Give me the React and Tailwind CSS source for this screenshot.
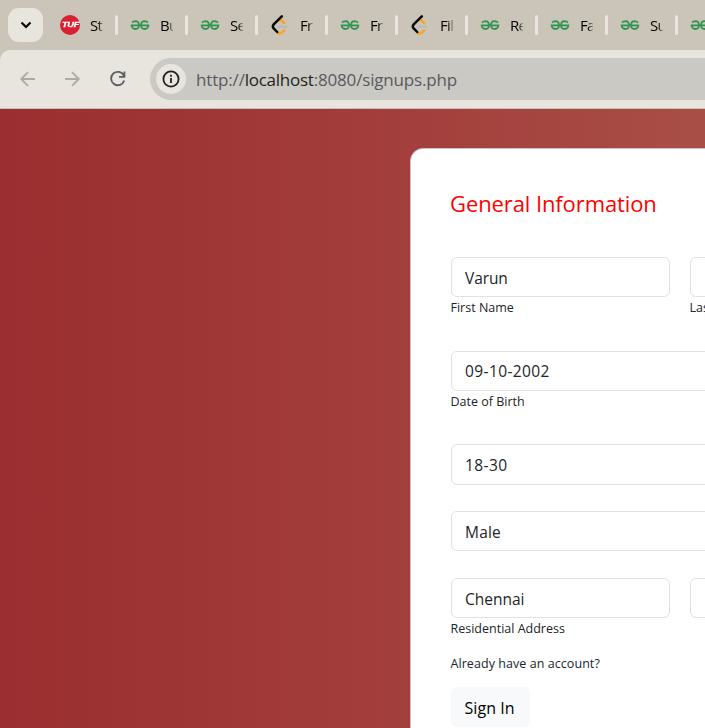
import React from "react";

const tabs = [
  ["tuf", "St"], ["gfg", "Bu"], ["gfg", "Se"], ["leet", "Fr"], ["gfg", "Fr"],
  ["leet", "Fil"], ["gfg", "Re"], ["gfg", "Fa"], ["gfg", "Su"], ["gfg", ""],
];

function Favicon({ kind }) {
  if (kind === "tuf")
    return (
      <span className="flex h-5 w-5 shrink-0 items-center justify-center rounded-full bg-[#d91f31] font-['Liberation_Sans',sans-serif] text-[8px] font-bold italic tracking-[-0.2px] text-white">
        <span className="scale-x-[1.15] [-webkit-text-stroke:0.3px_white]">TUF</span>
      </span>
    );
  if (kind === "leet")
    return (
      <svg className="h-5 w-5 shrink-0" viewBox="0 0 20 20" fill="none" strokeWidth="2.5" strokeLinecap="round">
        <path d="M9.4 5.2Q10.6 4.8 11.8 5.8L14.2 8M14.2 15.6 11.8 17.6Q9.7 19.2 7.5 17.8" stroke="#fca31f" />
        <path d="M11.8 1.4 3.7 9.4Q2 11.5 3.7 13.4L7.2 17" stroke="#080808" />
        <path d="M9 11.7h7.5" stroke="#b9b8b3" strokeWidth="2" />
      </svg>
    );
  return (
    <svg className="h-5 w-5 shrink-0" viewBox="0 0 20 20" fill="none" stroke="#2f9550" strokeWidth="1.8">
      <path d="M.8 10.3H19.2M2 7.6Q3.5 6.1 5.3 6.1Q9 6.2 9 10.3Q8.8 14 5.3 14Q2 13.8 1.6 10.5M18 7.6Q16.5 6.1 14.7 6.1Q11 6.2 11 10.3Q11.2 14 14.7 14Q18 13.8 18.4 10.5" />
    </svg>
  );
}

function Tab({ kind, label }) {
  return (
    <div className="flex h-full w-[70px] shrink-0 items-center">
      <Favicon kind={kind} />
      <span className="ml-[10px] w-[13px] overflow-hidden whitespace-nowrap bg-gradient-to-r from-black from-60% to-[#00000040] bg-clip-text text-[15px] leading-5 tracking-[-0.7px] text-transparent">{label}</span>
      <span className="ml-3 h-5 w-[3px] rounded-full bg-[#e9e5df]" />
    </div>
  );
}

function Field({ value, className }) {
  return (
    <div className={"flex shrink-0 items-center rounded-md border border-[#dee2e6] bg-white pl-[13px] text-[15.5px] text-[#212529] " + className}>
      {value}
    </div>
  );
}

function Caption({ children, className = "" }) {
  return (
    <p className={"-ml-px h-[21px] whitespace-nowrap pl-[0.5px] text-[12.5px] leading-[21px] " + className}>{children}</p>
  );
}

export default function App() {
  return (
    <div className="flex h-[728px] w-[705px] flex-col overflow-hidden bg-[#cac5b8] font-['Open_Sans','Noto_Sans',sans-serif]">
      <div className="flex h-[50px] shrink-0 items-center pl-2">
        <button className="mr-[17px] flex h-[34px] w-[35px] shrink-0 items-center justify-center rounded-[11px] bg-[#e8e5df]">
          <svg width="12" height="8" viewBox="0 0 12 8" fill="none" stroke="#080808" strokeWidth="2.2"><path d="m1.5 1.5 4.5 4.5 4.5-4.5" /></svg>
        </button>
        {tabs.map(([kind, label], i) => <Tab key={i} kind={kind} label={label} />)}
      </div>
      <div className="flex h-[59px] shrink-0 items-center rounded-tl-[10px] border-b border-[#c5c2bd] bg-[#e8e5df] pl-[18px]">
        <svg className="mr-6 shrink-0" width="20" height="20" viewBox="0 0 20 20" fill="none" stroke="#acaaa6" strokeWidth="1.8"><path d="M17 10H3.5M10 3.2 3.2 10l6.8 6.8" /></svg>
        <svg className="mr-[26px] shrink-0" width="20" height="20" viewBox="0 0 20 20" fill="none" stroke="#acaaa6" strokeWidth="1.8"><path d="M3 10h13.5M10 3.2 16.8 10 10 16.8" /></svg>
        <svg className="shrink-0" width="20" height="20" viewBox="0 0 20 20" fill="none" stroke="#5b5d60" strokeWidth="1.8"><path d="M15.8 6.5A6.7 6.7 0 1 0 16.2 11.5M16.4 2.4v5.4H11" /></svg>
        <div className="ml-[22px] flex h-[42px] flex-1 items-center rounded-l-full bg-[#cac9c4] pl-[6px]">
          <span className="flex h-[30px] w-[30px] shrink-0 items-center justify-center rounded-full bg-[#e8e5df]">
            <svg width="18" height="18" viewBox="0 0 18 18" fill="none" stroke="#202124" strokeWidth="1.8"><circle cx="9" cy="9" r="7.6" /><path d="M9 8v5M9 4.8v2" /></svg>
          </span>
          <span className="ml-[10px] mt-px whitespace-nowrap text-[17px] tracking-[-0.17px] text-[#5a5a5c]">http://<span className="tracking-[-0.25px] text-[#1f1f1f]">localhost</span>:8080/signups.php</span>
        </div>
      </div>
      <main className="flex min-h-0 flex-1 bg-[linear-gradient(to_right,#9b2e30,#a33f3c_58%,#a94e47)] pl-[410px] pt-[39px]">
        <section className="flex h-[640px] w-[700px] shrink-0 flex-col items-start rounded-tl-[13px] border border-[#c9c2c2] bg-white pl-10 text-[#212529]">
          <h1 className="-ml-px mt-[37px] h-[35px] whitespace-nowrap text-[22px] leading-[34px] tracking-[-0.1px] text-[#ff0000]">General Information</h1>
          <div className="mt-9 flex gap-5">
            <div className="w-[219px]"><Field value="Varun" className="h-10 w-[219px] pt-[3px] tracking-[-0.1px]" /><Caption>First Name</Caption></div>
            <div className="w-[219px]"><Field value="" className="h-10 w-[219px]" /><Caption>Last Name</Caption></div>
          </div>
          <Field value="09-10-2002" className="mt-[33px] h-10 w-[458px] pt-px tracking-[0.4px]" />
          <Caption>Date of Birth</Caption>
          <Field value="18-30" className="mt-8 h-[41px] w-[458px] pt-[2px] tracking-[0.4px]" />
          <Field value="Male" className="mt-[26px] h-10 w-[458px] pt-[3px] tracking-[0.2px]" />
          <div className="mt-[27px] flex gap-5">
            <div className="w-[219px]"><Field value="Chennai" className="h-10 w-[219px] pt-[3px] tracking-[0px]" /><Caption>Residential Address</Caption></div>
            <Field value="" className="h-10 w-[219px]" />
          </div>
          <Caption className="mt-[14px] tracking-[0.06px]">Already have an account?</Caption>
          <button className="mt-[13px] flex h-10 w-[79px] items-center rounded-md bg-[#f8f9fa] pl-[13.5px] pt-[2px] text-[16px] tracking-[0.05px] text-black">Sign In</button>
        </section>
      </main>
    </div>
  );
}
